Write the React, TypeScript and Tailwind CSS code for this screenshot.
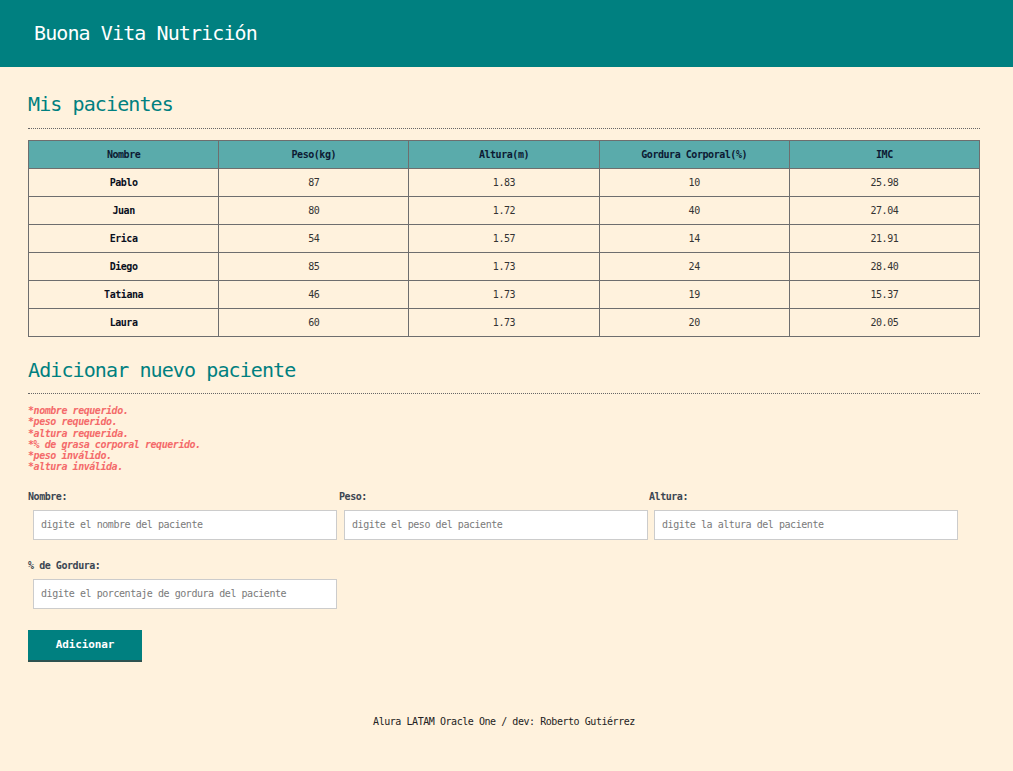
import React from "react";

const patients = [
  { n: "Pablo", p: "87", a: "1.83", g: "10", i: "25.98" },
  { n: "Juan", p: "80", a: "1.72", g: "40", i: "27.04" },
  { n: "Erica", p: "54", a: "1.57", g: "14", i: "21.91" },
  { n: "Diego", p: "85", a: "1.73", g: "24", i: "28.40" },
  { n: "Tatiana", p: "46", a: "1.73", g: "19", i: "15.37" },
  { n: "Laura", p: "60", a: "1.73", g: "20", i: "20.05" },
];

const errors = [
  "*nombre requerido.",
  "*peso requerido.",
  "*altura requerida.",
  "*% de grasa corporal requerido.",
  "*peso inválido.",
  "*altura inválida.",
];

function Field({ label, placeholder }: { label: string; placeholder: string }) {
  return (
    <div className="flex flex-col">
      <label className="text-[10px] leading-[12px] font-bold tracking-[-0.45px] text-[#3b4652]">{label}</label>
      <input
        placeholder={placeholder}
        className="mt-[7px] ml-[5px] w-[304px] h-[30px] bg-white border border-[#cccccc] px-[7px] text-[10px] tracking-[-0.45px] text-[#333] placeholder:text-[#7a7a7a] outline-none font-['DejaVu_Sans_Mono',monospace]"
      />
    </div>
  );
}

export default function App() {
  return (
    <div className="min-h-[771px] bg-[#fff2dd] font-['DejaVu_Sans_Mono',monospace] text-[#333]">
      <header className="h-[67px] bg-[#008080] flex items-center pl-[34px]">
        <h1 className="text-white text-[20px] tracking-[-0.9px] leading-[28px] pb-[1px]">Buona Vita Nutrición</h1>
      </header>
      <main className="pl-[28px] pr-[33px]">
        <h2 className="mt-[23px] text-[#008080] text-[20px] tracking-[-0.9px] leading-[28px] pb-[10px] border-b border-dotted border-[#666]">
          Mis pacientes
        </h2>
        <table className="mt-[11px] w-full table-fixed border-collapse border border-[#6e6e6e]">
          <thead>
            <tr className="h-[28px] bg-[#5aabab]">
              {["Nombre", "Peso(kg)", "Altura(m)", "Gordura Corporal(%)", "IMC"].map((h) => (
                <th key={h} className="border border-[#6e6e6e] text-[10px] tracking-[-0.45px] font-bold text-[#0c1a33]">
                  {h}
                </th>
              ))}
            </tr>
          </thead>
          <tbody>
            {patients.map((r) => (
              <tr key={r.n} className="h-[28px]">
                <td className="border border-[#6e6e6e] text-center text-[10px] tracking-[-0.45px] font-bold text-[#0a0f1e]">{r.n}</td>
                <td className="border border-[#6e6e6e] text-center text-[10px] tracking-[-0.45px] text-[#333]">{r.p}</td>
                <td className="border border-[#6e6e6e] text-center text-[10px] tracking-[-0.45px] text-[#333]">{r.a}</td>
                <td className="border border-[#6e6e6e] text-center text-[10px] tracking-[-0.45px] text-[#333]">{r.g}</td>
                <td className="border border-[#6e6e6e] text-center text-[10px] tracking-[-0.45px] text-[#333]">{r.i}</td>
              </tr>
            ))}
          </tbody>
        </table>
        <h2 className="mt-[19px] text-[#008080] text-[20px] tracking-[-0.9px] leading-[28px] pb-[9px] border-b border-dotted border-[#666]">
          Adicionar nuevo paciente
        </h2>
        <ul className="mt-[11px] text-[10px] leading-[11.3px] tracking-[-0.45px] italic font-bold text-[#f46a6a]">
          {errors.map((e) => (
            <li key={e}>{e}</li>
          ))}
        </ul>
        <form className="mt-[18px]" onSubmit={(e) => e.preventDefault()}>
          <div className="grid grid-cols-[311px_310px_310px]">
            <Field label="Nombre:" placeholder="digite el nombre del paciente" />
            <Field label="Peso:" placeholder="digite el peso del paciente" />
            <Field label="Altura:" placeholder="digite la altura del paciente" />
          </div>
          <div className="mt-[20px]">
            <Field label="% de Gordura:" placeholder="digite el porcentaje de gordura del paciente" />
          </div>
          <button className="block mt-[21px] w-[114px] h-[32px] bg-[#008080] border-b-2 border-[#2d5250] text-white text-[11px] tracking-[-0.1px] font-bold">
            Adicionar
          </button>
        </form>
        <footer className="mt-[54px] text-center text-[10px] leading-[12px] tracking-[-0.45px] text-[#222]">
          Alura LATAM Oracle One / dev: Roberto Gutiérrez
        </footer>
      </main>
    </div>
  );
}
